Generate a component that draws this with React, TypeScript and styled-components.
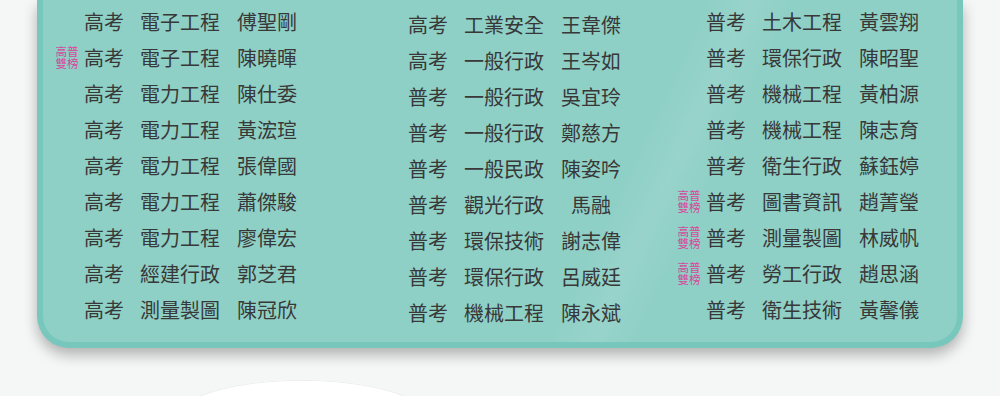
import styled, { createGlobalStyle } from "styled-components";

interface Entry {
  exam: string;
  dept: string;
  name: string;
  double?: boolean;
}

const columns: { offset: number; rows: Entry[] }[] = [
  {
    offset: 3,
    rows: [
      { exam: "高考", dept: "電子工程", name: "傅聖剛" },
      { exam: "高考", dept: "電子工程", name: "陳曉暉", double: true },
      { exam: "高考", dept: "電力工程", name: "陳仕委" },
      { exam: "高考", dept: "電力工程", name: "黃浤瑄" },
      { exam: "高考", dept: "電力工程", name: "張偉國" },
      { exam: "高考", dept: "電力工程", name: "蕭傑駿" },
      { exam: "高考", dept: "電力工程", name: "廖偉宏" },
      { exam: "高考", dept: "經建行政", name: "郭芝君" },
      { exam: "高考", dept: "測量製圖", name: "陳冠欣" },
    ],
  },
  {
    offset: 6,
    rows: [
      { exam: "高考", dept: "工業安全", name: "王韋傑" },
      { exam: "高考", dept: "一般行政", name: "王岑如" },
      { exam: "普考", dept: "一般行政", name: "吳宜玲" },
      { exam: "普考", dept: "一般行政", name: "鄭慈方" },
      { exam: "普考", dept: "一般民政", name: "陳姿吟" },
      { exam: "普考", dept: "觀光行政", name: "馬融" },
      { exam: "普考", dept: "環保技術", name: "謝志偉" },
      { exam: "普考", dept: "環保行政", name: "呂威廷" },
      { exam: "普考", dept: "機械工程", name: "陳永斌" },
    ],
  },
  {
    offset: 3,
    rows: [
      { exam: "普考", dept: "土木工程", name: "黃雲翔" },
      { exam: "普考", dept: "環保行政", name: "陳昭聖" },
      { exam: "普考", dept: "機械工程", name: "黃柏源" },
      { exam: "普考", dept: "機械工程", name: "陳志育" },
      { exam: "普考", dept: "衛生行政", name: "蘇鈺婷" },
      { exam: "普考", dept: "圖書資訊", name: "趙菁瑩", double: true },
      { exam: "普考", dept: "測量製圖", name: "林威帆", double: true },
      { exam: "普考", dept: "勞工行政", name: "趙思涵", double: true },
      { exam: "普考", dept: "衛生技術", name: "黃馨儀" },
    ],
  },
];

const GlobalStyle = createGlobalStyle`
  html, body {
    margin: 0;
    padding: 0;
    height: 396px;
    overflow: hidden;
    background: #f5f6f6;
  }
`;

const Page = styled.div`
  width: 1000px;
  height: 396px;
  padding: 0 37px;
  box-sizing: border-box;
  background:
    radial-gradient(ellipse 132px 42px at 302px 422px, #ffffff 97%, #eceeee 99%, transparent 100%),
    #f5f6f6;
  font-family: "Noto Sans CJK TC", "Noto Sans", sans-serif;
`;

const Panel = styled.div`
  height: 348px;
  box-sizing: border-box;
  background:
    linear-gradient(115deg, transparent 62%, rgba(255, 255, 255, 0.08) 66%, transparent 70%),
    #8fd0c6;
  border: 6px solid #77c7bc;
  border-top: none;
  border-radius: 0 0 32px 32px;
  box-shadow: 0 7px 14px rgba(0, 0, 0, 0.28);
  display: grid;
  grid-template-columns: 324px 298px auto;
  padding-left: 12px;
`;

const Column = styled.div<{ $offset: number }>`
  padding-top: ${(p) => p.$offset}px;
  display: flex;
  flex-direction: column;
`;

const Row = styled.div`
  height: 36px;
  display: flex;
  align-items: center;
  font-size: 20px;
  color: #383838;
  white-space: nowrap;
`;

const Badge = styled.div`
  width: 24px;
  margin-right: 5px;
  font-size: 11.5px;
  line-height: 12px;
  white-space: normal;
  word-break: break-all;
  color: #d6489c;
  text-align: center;
`;

const Exam = styled.span`
  width: 40px;
  margin-right: 16px;
`;

const Dept = styled.span`
  width: 80px;
  margin-right: 17px;
`;

const Name = styled.span`
  width: 60px;
  text-align: center;
`;

export default function App() {
  return (
    <>
      <GlobalStyle />
      <Page>
        <Panel>
          {columns.map((col, i) => (
            <Column key={i} $offset={col.offset}>
              {col.rows.map((r, j) => (
                <Row key={j}>
                  <Badge>{r.double ? "高普雙榜" : ""}</Badge>
                  <Exam>{r.exam}</Exam>
                  <Dept>{r.dept}</Dept>
                  <Name>{r.name}</Name>
                </Row>
              ))}
            </Column>
          ))}
        </Panel>
      </Page>
    </>
  );
}
